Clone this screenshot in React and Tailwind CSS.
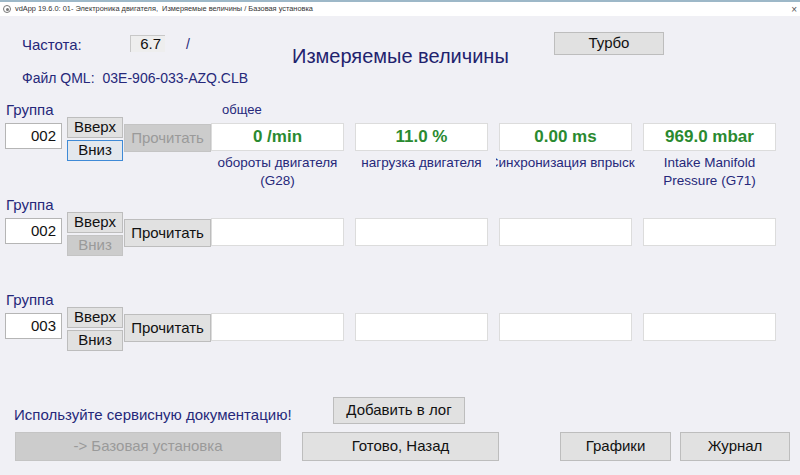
import React from "react";

const FONT = { fontFamily: '"Liberation Sans", Arial, sans-serif' };

const GROUPS = [
  {
    num: "002",
    readDisabled: true,
    downState: "focus",
    values: ["0 /min", "11.0 %", "0.00 ms", "969.0 mbar"],
    labels: [
      ["обороты двигателя", "(G28)"],
      ["нагрузка двигателя"],
      ["Синхронизация впрыска"],
      ["Intake Manifold", "Pressure (G71)"],
    ],
    header: "общее",
  },
  { num: "002", downState: "disabled", values: ["", "", "", ""] },
  { num: "003", values: ["", "", "", ""] },
];

function Btn({ children, className = "", disabled, focused }) {
  const look = disabled
    ? "bg-[#cccccc] border-[#c4c4c4] text-[#9a9a9a]"
    : focused
    ? "bg-[#e3e8ee] border-[#3f8ad6] text-[#111]"
    : "bg-[#e1e1e1] border-[#bdbdbd] text-[#111]";
  return (
    <div className={`flex items-center justify-center border ${look} ${className}`}>
      {children}
    </div>
  );
}

function Group({ g }) {
  return (
    <div className="h-[95px]">
      <div className="flex h-[17px] items-center pt-[3px]">
        <span className="ml-[6px] w-[216px] text-[15px] text-[#26287a]">Группа</span>
        {g.header && <span className="text-[13px] text-[#26287a]">{g.header}</span>}
      </div>
      <div className="flex items-start">
        <div className="ml-[5px] mt-[6px] flex h-[26px] w-[57px] items-center justify-end border border-[#b5b5b5] bg-white pr-[5px] text-[15px] text-[#111]">
          {g.num}
        </div>
        <div className="ml-[5px] flex w-[56px] flex-col gap-[2px]">
          <Btn className="h-[21px] text-[15px]">Вверх</Btn>
          <Btn
            className="h-[21px] text-[15px]"
            disabled={g.downState === "disabled"}
            focused={g.downState === "focus"}
          >
            Вниз
          </Btn>
        </div>
        <Btn className="ml-[1px] mt-[7px] h-[28px] w-[87px] text-[15px]" disabled={g.readDisabled}>
          Прочитать
        </Btn>
        <div className="mt-[6px] flex gap-[11px]">
          {g.values.map((v, i) => (
            <div key={i} className="flex w-[133px] flex-col items-center">
              <div className="flex h-[28px] w-[133px] items-center justify-center border border-[#dcdcdc] bg-white text-[17px] font-bold text-[#2a8a30]">
                {v}
              </div>
              {g.labels && (
                <div className="mt-[3px] flex w-[139px] flex-col items-center overflow-hidden text-[13.5px] leading-[18px] text-[#26287a]">
                  {g.labels[i].map((l, j) => (
                    <span key={j} className="whitespace-nowrap">{l}</span>
                  ))}
                </div>
              )}
            </div>
          ))}
        </div>
      </div>
    </div>
  );
}

export default function App() {
  return (
    <div className="h-[475px] w-[800px] overflow-hidden bg-[#f0f0f5]" style={FONT}>
      {/* title bar */}
      <div className="flex h-[16px] items-center border-t-2 border-[#9db8c8] bg-white text-[7.4px] text-[#333]">
        <span className="ml-[3px] flex h-[8px] w-[8px] items-center justify-center rounded-full border border-[#777]">
          <span className="h-[3px] w-[3px] rounded-full bg-[#777]" />
        </span>
        <span className="ml-[4px]">vdApp 19.6.0: 01- Электроника двигателя,&nbsp; Измеряемые величины / Базовая установка</span>
        <span className="ml-auto mr-[3px] text-[10px] text-[#555]">×</span>
      </div>

      {/* header */}
      <div className="flex h-[44px] items-start pt-[16px]">
        <span className="ml-[22px] mt-[2px] w-[108px] text-[15px] text-[#26287a]">Частота:</span>
        <div className="mt-[3px] flex h-[17px] w-[35px] items-center justify-end border-l border-t border-[#c8c8c8] bg-[#eeeeee] pr-[4px] text-[15px] text-[#111]">
          6.7
        </div>
        <span className="ml-[21px] mt-[2px] w-[106px] text-[14px] text-[#26287a]">/</span>
        <span className="mt-[9px] w-[262px] text-[20px] text-[#1f236e]">Измеряемые величины</span>
        <Btn className="h-[23px] w-[110px] text-[15px]">Турбо</Btn>
      </div>
      <div className="flex h-[40px] items-start pt-[8px] text-[14px] text-[#26287a]">
        <span className="ml-[22px]">Файл QML:</span>
        <span className="ml-[8px]">03E-906-033-AZQ.CLB</span>
      </div>

      {/* groups */}
      {GROUPS.map((g, i) => (
        <Group key={i} g={g} />
      ))}

      {/* footer */}
      <div className="mt-[12px] flex h-[27px] items-center">
        <span className="ml-[14px] mt-[10px] w-[319px] whitespace-nowrap text-[15px] text-[#26287a]">
          Используйте сервисную документацию!
        </span>
        <Btn className="h-[27px] w-[132px] text-[15px]">Добавить в лог</Btn>
      </div>
      <div className="mt-[8px] flex h-[29px] items-center text-[15px]">
        <Btn className="ml-[15px] h-[29px] w-[266px]" disabled>
          -&gt; Базовая установка
        </Btn>
        <Btn className="ml-[21px] h-[29px] w-[197px]">Готово, Назад</Btn>
        <Btn className="ml-[61px] h-[29px] w-[111px]">Графики</Btn>
        <Btn className="ml-[9px] h-[29px] w-[110px]">Журнал</Btn>
      </div>
    </div>
  );
}
